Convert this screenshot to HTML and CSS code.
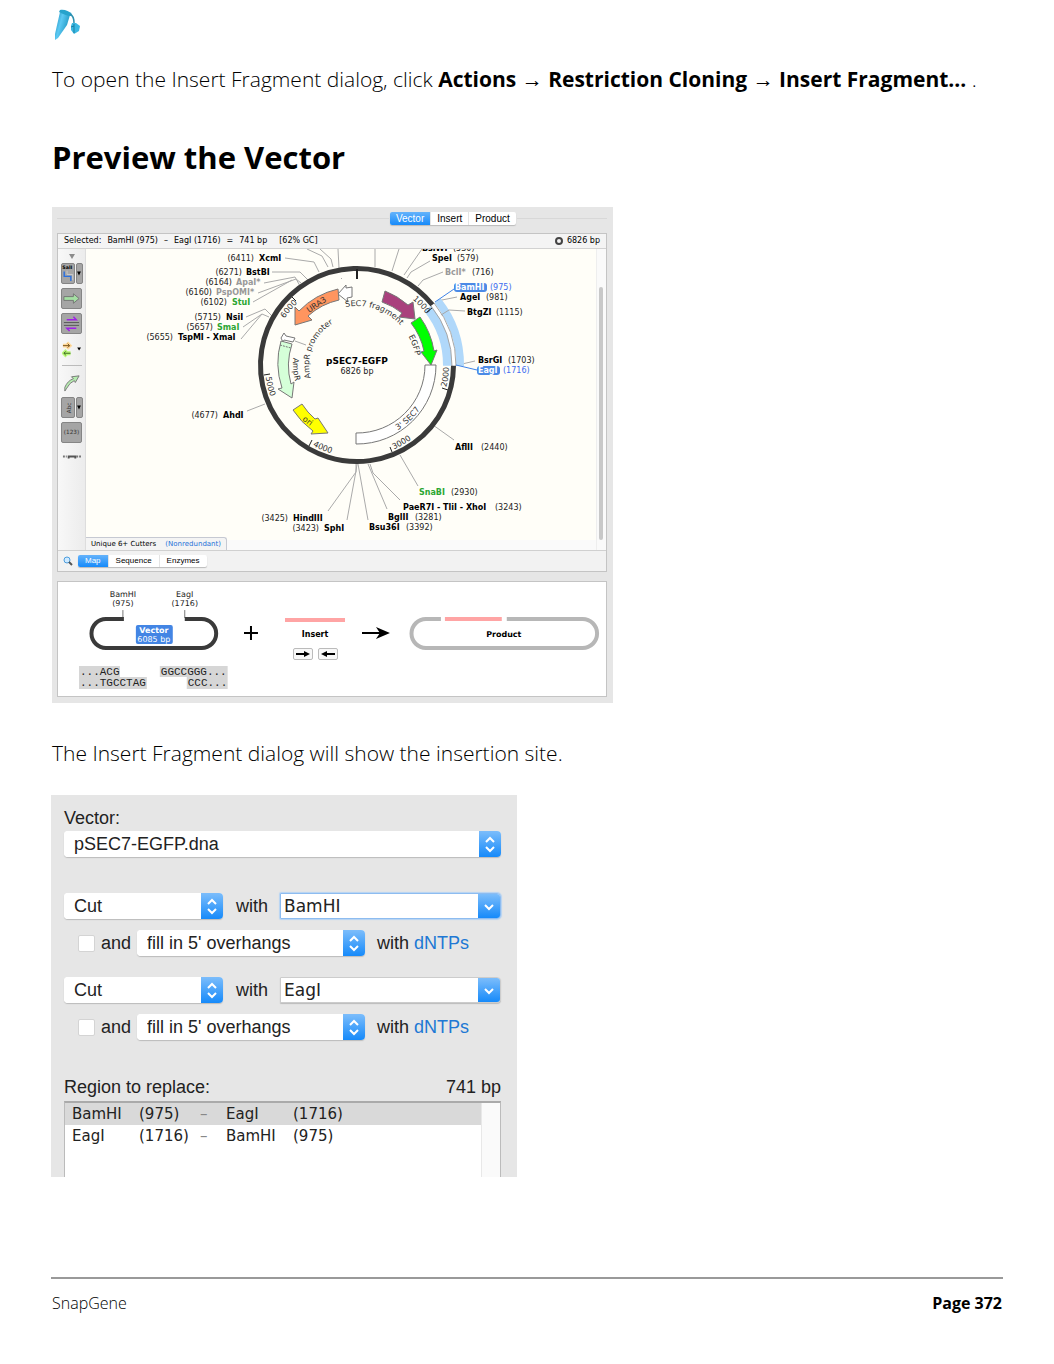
FILE: index.html
```html
<!DOCTYPE html>
<html lang="en">
<head>
<meta charset="utf-8">
<meta name="viewport" content="width=device-width, initial-scale=1">
<title>Insert Fragment - SnapGene</title>
<link rel="stylesheet" href="styles.css">
</head>
<body>
<div class="page">
  <header class="page-header">
    <svg class="logo" viewBox="0 0 28 34" role="img" aria-label="SnapGene">
      <defs><linearGradient id="tube" x1="0" x2="1" y1="0" y2=".5"><stop offset="0" stop-color="#1688b4"/><stop offset=".45" stop-color="#5cc9f3"/><stop offset="1" stop-color="#1b93bd"/></linearGradient></defs>
      <path d="M8 4 18 7 15 17 6 30 3 32 3 26Z" fill="url(#tube)"/>
      <path d="M8 2c4-1 9 1 12 4l-1 2C15 8 11 6 7 4Z" fill="#27a3cc"/>
      <path d="M18 6q4 2 4 9" fill="none" stroke="#2c8fae" stroke-width="1.5"/>
      <path d="M20 15l4 0 4 3-1 5-5 3-3-4 0-4Z" fill="#3ab8e2"/>
      <path d="M22 16v9M19 19l3-1" stroke="#187ea4" fill="none"/>
    </svg>
  </header>

  <main>
    <p>To open the Insert Fragment dialog, click <b>Actions</b> → <b>Restriction Cloning</b> → <b>Insert Fragment... </b>.</p>
    <h1>Preview the Vector</h1>

    <section class="window" aria-label="Vector preview">
      <div class="window-tabs">
        <div class="segmented big">
          <button class="active">Vector</button><button>Insert</button><button>Product</button>
        </div>
      </div>

      <div class="panel">
        <div class="info-bar">
          <span>Selected:</span><span>BamHI (975)</span><span>–</span><span>EagI (1716)</span><span>=</span><span>741 bp</span><span class="gc">[62% GC]</span>
          <span class="total"><i class="ring"></i>6826 bp</span>
        </div>
        <div class="workspace">
          <div class="toolbar">
            <svg class="marker" viewBox="0 0 6 5" aria-hidden="true"><path d="M0 0H6L3 5Z" fill="#8b8b8b"/></svg>
            <div class="tool-pair">
              <button class="tool" aria-label="Enzyme sites"><svg viewBox="0 0 12 20"><text x="0" y="5" class="tool-tiny">SalI</text><path d="M2 8V13H9V18" fill="none" stroke="#2b70e0" stroke-width="1.5"/><path d="M5 7V11H11V17" fill="none" stroke="#ccc"/></svg></button>
              <button class="tool narrow" aria-label="Enzyme options"><svg viewBox="0 0 4 20"><path d="M0 8H4L2 12Z"/></svg></button>
            </div>
            <button class="tool" aria-label="Features"><svg viewBox="0 0 20 20"><path d="M2 8H12V5L18 10 12 15V12H2Z" fill="#a4dfa3" stroke="#747474"/></svg></button>
            <button class="tool" aria-label="Primers"><svg viewBox="0 0 20 20"><path d="M2 9H18M2 12H18" stroke="#555"/><path d="M5 6H15L12 3M15 15H5L8 18" fill="none" stroke="#a020e8" stroke-width="1.5"/></svg></button>
            <button class="tool plain" aria-label="Translations"><svg viewBox="0 0 20 20"><path d="M1 7H8M5 4 8 7 5 10" fill="none" stroke="#ffd99a" stroke-width="4"/><path d="M1 7H8M6 5 8 7 6 9" fill="none" stroke="#704b16"/><path d="M2 15H9M5 12 2 15 5 18" fill="none" stroke="#b9f779" stroke-width="4"/><path d="M2 15H9M4 13 2 15 4 17" fill="none" stroke="#3c681c"/><path d="M16 9H20L18 12Z"/></svg></button>
            <span class="tool-rule"></span>
            <button class="tool plain" aria-label="Open reading frames"><svg viewBox="0 0 20 20"><path d="M3 19V15Q6 8 12 6L10 4 18 3 14 10 13 8Q8 10 5 16Z" fill="#b5edaf" stroke="#777"/></svg></button>
            <div class="tool-pair">
              <button class="tool" aria-label="Labels"><svg viewBox="0 0 12 20"><text class="tool-text" transform="translate(9 16) rotate(-90)">Abc</text></svg></button>
              <button class="tool narrow" aria-label="Label options"><svg viewBox="0 0 4 20"><path d="M0 8H4L2 12Z"/></svg></button>
            </div>
            <button class="tool" aria-label="Numbering"><svg viewBox="0 0 20 20"><text class="tool-text" x="10" y="12" text-anchor="middle">(123)</text></svg></button>
            <button class="tool plain" aria-label="Scale"><svg viewBox="0 0 20 20"><path d="M1 9H5M15 9H20" stroke="#777" stroke-width="2" stroke-dasharray="2 1"/><path d="M7 11V9H14V11" fill="none" stroke="#555" stroke-width="2"/></svg></button>
          </div>

          <div class="canvas">
            <svg class="plasmid" viewBox="86 249 510 288" role="img" aria-label="Plasmid map of pSEC7-EGFP">
              <defs>
                <path id="arc59" d="M298 365A59 59 0 0 1 416 365"/>
                <path id="arc48" d="M357 413A48 48 0 0 1 357 317"/>
                <path id="arc86" d="M271 365A86 86 0 0 1 443 365"/>
                <path id="arc64" d="M357 301A64 64 0 0 0 357 429"/>
                <path id="arc92" d="M265 365A92 92 0 0 0 449 365"/>
                <path id="arc77" d="M357 442A77 77 0 0 0 434 365"/>
              </defs>
              <g class="leader">
                <path d="M285 258 314 262 319 272M272 272H300L308 280M264 283 295 277 300 286M258 293 296 279 301 283M253 302 292 280M246 317 265 309 272 316M243 327 262 314 269 317M241 339 262 314M247 411 265 404"/>
                <path d="M307 249 322 256 328 267M320 249 331 259 333 267M338 249 339 268M375 249V267M399 249 392 271M422 249 404 275M430 261 411 272 407 278M443 272 423 280 418 286M457 297 437 301M465 311 449 310 442 314M475 361 462 364"/>
                <path d="M433 425 454 440M400 455 418 486M370 464 373 473 400 500M368 464 376 483 387 509M358 464 368 520M357 464 356 471 347 520M356 464V472L328 511M341 278 342 279M295 341 306 345"/>
              </g>
              <path d="M427.700 308.500A90.500 90.500 0 0 1 447.500 365.800" class="band" stroke-width="9"/>
              <path d="M437.500 300.700A103 103 0 0 1 460 365.900" class="band" stroke-width="8"/>
              <path d="M433 304.500A97 97 0 0 1 454 366" fill="none" stroke="#fff" stroke-width="4"/>
              <path d="M431 306A95 95 0 0 1 452 366M434 303A99 99 0 0 1 456 366M441 315 449 310" fill="none" stroke="#a7a7a7"/>
              <path d="M435 302 454 289M456 365 477 370" stroke="#3f83e8" fill="none"/>
              <path d="M453.500 365.800A96.500 96.500 0 1 1 432.400 304.800" fill="none" stroke="#3a3a3a" stroke-width="5"/>
              <path d="M357 269V279" stroke="#222" stroke-width="2"/>
              <path d="M432 308 427 312M448 390 442 388M392 452 390 447M309 446 312 440M264 375 270 374M292 297 296 301" stroke="#222"/>
              <g class="feature">
                <path fill="#ff955f" d="M338 289A79 79 0 0 0 299 311L295 307 295 325 312 320 308 316A68 68 0 0 1 339 300Z"/>
                <path fill="#fff" d="M338 294 346 285V288L352 287V297L347 298 348 302Z"/>
                <path fill="#a9417d" d="M385 291A79 79 0 0 1 408 305L413 302 415 319 399 317 402 313A68 68 0 0 0 382 302Z"/>
                <path fill="#0f0" d="M420 317A79 79 0 0 1 434 351L437 350 431 365 421 352 424 351A68 68 0 0 0 411 323Z"/>
                <path fill="#fff" d="M436 365A79 79 0 0 1 356 444V433A68 68 0 0 0 425 365Z"/>
                <path fill="#ff0" d="M302 404A68 68 0 0 0 315 419L318 418 328 433 311 434 313 431A79 79 0 0 1 293 410Z"/>
                <path fill="#d5ffd8" d="M281 341A79 79 0 0 0 282 388L278 389 292 398 294 382 291 384A68 68 0 0 1 292 344Z"/>
                <path d="M280 345 291 348" stroke-dasharray="2 1"/>
                <path fill="#fff" d="M281 338 284 333 286 336 295 338 293 342 284 340 283 342Z"/>
              </g>
              <g class="arc-text">
                <text><textPath href="#arc59" startOffset="81">SEC7 fragment</textPath></text>
                <text><textPath href="#arc59" startOffset="155">EGFP</textPath></text>
                <text><textPath href="#arc48" startOffset="62">AmpR promoter</textPath></text>
                <text><textPath href="#arc64" startOffset="93">AmpR</textPath></text>
                <text><textPath href="#arc77" startOffset="43">3' SEC7</textPath></text>
                <text transform="translate(309 313) rotate(-34)">URA3</text>
                <text transform="translate(302 420) rotate(36)">ori</text>
                <text><textPath href="#arc86" startOffset="195">1000</textPath></text>
                <text><textPath href="#arc86" startOffset="49">6000</textPath></text>
                <text><textPath href="#arc92" startOffset="266">2000</textPath></text>
                <text><textPath href="#arc92" startOffset="182">3000</textPath></text>
                <text><textPath href="#arc92" startOffset="98">4000</textPath></text>
                <text><textPath href="#arc92" startOffset="12">5000</textPath></text>
              </g>
              <text class="plasmid-name" x="357" y="364" text-anchor="middle">pSEC7-EGFP</text>
              <text class="num" x="357" y="374" text-anchor="middle">6826 bp</text>
              <rect x="454" y="283" width="33" height="9" rx="3" fill="#4b8ae6"/>
              <rect x="477" y="366" width="23" height="9" rx="3" fill="#4b8ae6"/>
              <g class="num" text-anchor="end">
                <text x="254" y="261">(6411)</text><text x="242" y="275">(6271)</text><text x="232" y="285">(6164)</text><text x="212" y="295">(6160)</text><text x="227" y="305">(6102)</text><text x="221" y="320">(5715)</text><text x="213" y="330">(5657)</text><text x="173" y="340">(5655)</text><text x="218" y="418">(4677)</text><text x="288" y="521">(3425)</text><text x="319" y="531">(3423)</text>
              </g>
              <g class="num">
                <text x="453" y="251">(530)</text><text x="457" y="261">(579)</text><text x="472" y="275">(716)</text><text x="486" y="300">(981)</text><text x="496" y="315">(1115)</text><text x="508" y="363">(1703)</text><text x="481" y="450">(2440)</text><text x="451" y="495">(2930)</text><text x="495" y="510">(3243)</text><text x="415" y="520">(3281)</text><text x="406" y="530">(3392)</text>
                <text class="blue" x="490" y="290">(975)</text><text class="blue" x="503" y="373">(1716)</text>
              </g>
              <g class="site">
                <text x="259" y="261">XcmI</text><text x="246" y="275">BstBI</text><text class="dim" x="236" y="285">ApaI*</text><text class="dim" x="216" y="295">PspOMI*</text><text class="green" x="232" y="305">StuI</text><text x="226" y="320">NsiI</text><text class="green" x="217" y="330">SmaI</text><text x="178" y="340">TspMI - XmaI</text><text x="223" y="418">AhdI</text><text x="293" y="521">HindIII</text><text x="324" y="531">SphI</text>
                <text x="422" y="251">BsiWI</text><text x="432" y="261">SpeI</text><text class="dim" x="445" y="275">BclI*</text><text class="white" x="455" y="290">BamHI</text><text x="460" y="300">AgeI</text><text x="467" y="315">BtgZI</text><text x="478" y="363">BsrGI</text><text class="white" x="478" y="373">EagI</text><text x="455" y="450">AflII</text><text class="green" x="419" y="495">SnaBI</text><text x="403" y="510">PaeR7I - TliI - XhoI</text><text x="388" y="520">BglII</text><text x="369" y="530">Bsu36I</text>
              </g>
            </svg>
            <div class="canvas-foot"><div class="enzyme-tab">Unique 6+ Cutters <a href="#nonredundant">(Nonredundant)</a></div></div>
          </div>
          <div class="scroll-track"><div class="scroll-thumb"></div></div>
        </div>
        <div class="view-bar">
          <svg class="lens" viewBox="0 0 10 10" aria-hidden="true"><circle cx="4" cy="4" r="3" fill="#cfeaff" stroke="#4c9ddd"/><path d="M6 6 9 9" stroke="#555" stroke-width="2"/></svg>
          <div class="segmented"><button class="active">Map</button><button>Sequence</button><button>Enzymes</button></div>
        </div>
      </div>

      <div class="panel assembly">
        <svg class="vector-art" viewBox="78 582 152 114" role="img" aria-label="Cut vector">
          <g class="num" text-anchor="middle"><text x="123" y="597">BamHI</text><text x="123" y="606">(975)</text><text x="185" y="597">EagI</text><text x="185" y="606">(1716)</text></g>
          <path d="M123 610V618M185 610V618" stroke="#777"/>
          <path d="M124 619H106A14 14 0 0 0 106 648H202A14 14 0 0 0 202 619H185" fill="none" stroke="#3a3a3a" stroke-width="4"/>
          <rect x="136" y="625" width="37" height="19" rx="2" fill="#4385e4"/>
          <text class="site white" x="154" y="633" text-anchor="middle">Vector</text><text class="num white" x="154" y="642" text-anchor="middle">6085 bp</text>
          <path d="M79 666H120V677H147V689H79ZM160 666H228V689H187V677H160Z" fill="#d6d6d6"/>
          <g class="bases"><text x="80" y="675">...ACG</text><text x="80" y="686">...TGCCTAG</text><text x="161" y="675">GGCCGGG...</text><text x="188" y="686">CCC...</text></g>
        </svg>
        <svg class="plus" viewBox="0 0 14 14" aria-label="plus"><path d="M7 0V14M0 7H14" stroke="#000" stroke-width="2"/></svg>
        <div class="insert">
          <span class="insert-line"></span>
          <b>Insert</b>
          <div class="orient">
            <button aria-label="Forward"><svg viewBox="0 0 16 8"><path d="M1 4H12" stroke="#000" stroke-width="2"/><path d="M9 1 15 4 9 7Z"/></svg></button>
            <button aria-label="Reverse"><svg viewBox="0 0 16 8"><path d="M4 4H15" stroke="#000" stroke-width="2"/><path d="M7 1 1 4 7 7Z"/></svg></button>
          </div>
        </div>
        <svg class="arrow" viewBox="0 0 28 12" aria-hidden="true"><path d="M0 6H20" stroke="#000" stroke-width="2"/><path d="M14 0 28 6 14 12 18 6Z"/></svg>
        <svg class="product-art" viewBox="409 616 191 35" role="img" aria-label="Product">
          <path d="M441 619H426A14 14 0 0 0 426 648H583A14 14 0 0 0 583 619H507" fill="none" stroke="#b7b7b7" stroke-width="4"/><path d="M445 619H502" stroke="#ffa4a4" stroke-width="4"/>
          <text class="site" x="504" y="637" text-anchor="middle">Product</text>
        </svg>
      </div>
    </section>

    <p class="caption">The Insert Fragment dialog will show the insertion site.</p>

    <form class="dialog">
      <label for="vector">Vector:</label>
      <div class="picker"><select id="vector"><option>pSEC7-EGFP.dna</option></select><span class="step"><svg viewBox="0 0 12 18"><path d="M2 7 6 3 10 7M2 12 6 16 10 12"/></svg></span></div>

      <div class="cut first">
        <div class="picker"><select aria-label="First cut action"><option>Cut</option></select><span class="step"><svg viewBox="0 0 12 18"><path d="M2 7 6 3 10 7M2 12 6 16 10 12"/></svg></span></div>
        <label for="enzyme1">with</label>
        <div class="combo focus"><input id="enzyme1" type="text" value="BamHI"><button type="button" class="step" aria-label="Choose enzyme"><svg viewBox="0 0 12 18"><path d="M2 8 6 12 10 8"/></svg></button></div>
      </div>
      <div class="fill">
        <input type="checkbox" id="fill1"><label for="fill1">and</label>
        <div class="picker"><select aria-label="First end treatment"><option>fill in 5' overhangs</option></select><span class="step"><svg viewBox="0 0 12 18"><path d="M2 7 6 3 10 7M2 12 6 16 10 12"/></svg></span></div>
        <span>with <a href="#dntps">dNTPs</a></span>
      </div>

      <div class="cut">
        <div class="picker"><select aria-label="Second cut action"><option>Cut</option></select><span class="step"><svg viewBox="0 0 12 18"><path d="M2 7 6 3 10 7M2 12 6 16 10 12"/></svg></span></div>
        <label for="enzyme2">with</label>
        <div class="combo"><input id="enzyme2" type="text" value="EagI"><button type="button" class="step" aria-label="Choose enzyme"><svg viewBox="0 0 12 18"><path d="M2 8 6 12 10 8"/></svg></button></div>
      </div>
      <div class="fill">
        <input type="checkbox" id="fill2"><label for="fill2">and</label>
        <div class="picker"><select aria-label="Second end treatment"><option>fill in 5' overhangs</option></select><span class="step"><svg viewBox="0 0 12 18"><path d="M2 7 6 3 10 7M2 12 6 16 10 12"/></svg></span></div>
        <span>with <a href="#dntps">dNTPs</a></span>
      </div>

      <div class="region-head"><span id="region">Region to replace:</span><span>741 bp</span></div>
      <div class="region-list">
        <table aria-labelledby="region">
          <tr class="selected"><td>BamHI</td><td>(975)</td><td class="dash">–</td><td>EagI</td><td>(1716)</td></tr>
          <tr><td>EagI</td><td>(1716)</td><td class="dash">–</td><td>BamHI</td><td>(975)</td></tr>
        </table>
        <div class="list-track"></div>
      </div>
    </form>
  </main>

  <footer class="page-footer"><span>SnapGene</span><b>Page 372</b></footer>
</div>
</body>
</html>
```
FILE: styles.css
```css
* { box-sizing: border-box; }
body { margin: 0; background: #fff; color: #000; font-family: "Open Sans", sans-serif; font-size: 21px; font-weight: 300; line-height: 30px; }
svg { display: block; }
b { font-weight: 700; }
button { font: inherit; color: inherit; border: 0; padding: 0; margin: 0; background: none; }
.page { padding: 8px 51px 48px 52px; }
.page-header { height: 34px; }
.logo { width: 28px; height: 34px; }
p { margin: 22px 0 0; }
h1 { margin: 41px 0 0; font-size: 31px; line-height: 44px; font-weight: 700; }

/* Vector preview window */
.window { width: 100%; max-width: 561px; margin-top: 28px; padding: 4px 6px 6px 5px; background: #e6e6e6; font-family: "DejaVu Sans", sans-serif; font-weight: 400; font-size: 8px; line-height: 10px; }
.window-tabs { display: flex; align-items: center; gap: 1px; height: 15px; margin-bottom: 7px; }
.window-tabs::before { content: ""; flex: 331; height: 1px; background: #d8d8d8; }
.window-tabs::after { content: ""; flex: 90; height: 1px; background: #d8d8d8; }
.segmented { display: flex; background: #fff; border-radius: 2px; box-shadow: 0 1px 1px #bbb; font-family: "Liberation Sans", sans-serif; font-size: 8px; line-height: 12px; }
.segmented button { padding: 0 7px; border-right: 1px solid #e4e4e4; }
.segmented button:last-child { border-right: 0; }
.segmented .active { background: linear-gradient(#65b3fb, #168afa); color: #fff; border-radius: 2px 0 0 2px; }
.segmented.big { font-size: 10px; line-height: 13px; }
.segmented.big button { padding: 0 6px; }
.panel { background: #fff; border: 1px solid #c4c4c4; }
.info-bar { display: flex; align-items: center; gap: 6px; height: 15px; padding: 0 6px; background: #f4f4f4; border-bottom: 1px solid #d2d2d2; white-space: nowrap; }
.gc { margin-left: 6px; }
.total { display: flex; align-items: center; gap: 4px; margin-left: auto; }
.ring { width: 8px; height: 8px; border: 2px solid #444; border-radius: 50%; }
.workspace { display: flex; border-bottom: 1px solid #d0d0d0; }
.toolbar { display: flex; flex-direction: column; align-items: center; gap: 4px; flex: 0 0 28px; padding-top: 5px; background: linear-gradient(90deg, #f8f8f8, #ececec); border-right: 1px solid #ddd; }
.marker { width: 6px; height: 5px; }
.tool-pair { display: flex; gap: 1px; }
.tool { display: flex; align-items: center; justify-content: center; width: 21px; height: 21px; background: #a5a5a5; border: 1px solid #858585; border-radius: 2px; }
.tool svg { height: 19px; width: 19px; }
.tool-pair .tool { width: 14px; height: 21px; }
.tool-pair .tool svg { width: 12px; }
.tool-pair .narrow { width: 7px; }
.tool-pair .narrow svg { width: 4px; }
.tool.plain { background: none; border-color: transparent; }
.tool-rule { width: 20px; height: 1px; margin: 2px 0; background: #bbb; }
.tool-tiny { font-size: 5px; font-weight: 700; }
.tool-text { font-size: 6px; fill: #333; }
.canvas { flex: 1; background: #fffef8; min-width: 0; }
.plasmid { width: 100%; height: auto; }
.canvas-foot { height: 13px; background: linear-gradient(#fffef8 3px, #fafafa 3px); }
.enzyme-tab { width: max-content; height: 13px; padding: 1px 5px; background: #f4f4f4; border: 1px solid #c6c9d2; border-left: 0; border-bottom: 0; border-radius: 0 3px 0 0; font-size: 7px; }
.enzyme-tab a { margin-left: 7px; color: #2472d8; text-decoration: none; }
.scroll-track { flex: 0 0 10px; padding: 38px 3px 10px 2px; background: #fafafa; border-left: 1px solid #eee; }
.scroll-thumb { height: 100%; background: #c8c8c8; border-radius: 3px; }
.view-bar { display: flex; align-items: center; gap: 5px; height: 20px; padding: 0 5px; background: #f2f2f2; }
.lens { width: 10px; height: 10px; }
.leader { fill: none; stroke: #aaa; }
.band { fill: none; stroke: #b0d8fa; }
.feature { fill: none; stroke: #777; stroke-width: 1px; }
.arc-text { font-size: 8px; fill: #333; }
.num { font-size: 8px; fill: #222; }
.site { font-size: 8px; font-weight: 700; }
.plasmid-name { font-size: 9px; font-weight: 700; }
.green { fill: #2ca632; }
.dim { fill: #999; }
.blue { fill: #3c6cf0; }
.white { fill: #fff; }

/* Assembly overview */
.assembly { display: flex; align-items: center; height: 116px; margin-top: 9px; padding: 0 6px 0 20px; }
.vector-art { width: 152px; height: 114px; }
.bases { font-family: "Liberation Mono", monospace; font-size: 11px; fill: #222; }
.plus { width: 14px; height: 14px; margin: 0 27px 12px 14px; }
.insert { display: flex; flex-direction: column; align-items: center; width: 61px; }
.insert-line { width: 100%; height: 4px; margin-bottom: 8px; background: #ffa4a4; }
.orient { display: flex; gap: 5px; margin-top: 8px; }
.orient button { width: 20px; height: 12px; border: 1px solid #bbb; border-radius: 2px; background: #f8f8f8; }
.orient svg { width: 16px; height: 8px; margin: 1px; }
.arrow { width: 28px; height: 12px; margin: 0 19px 12px 17px; }
.product-art { width: 191px; height: 35px; margin-bottom: 12px; }

.caption { margin-top: 35px; }

/* Insert fragment dialog */
.dialog { width: 100%; max-width: 466px; height: 382px; margin: 27px 0 0 -1px; padding: 12px 16px 0 13px; background: #e6e6e6; overflow: hidden; font-family: "Liberation Sans", sans-serif; font-weight: 400; font-size: 18px; line-height: 22px; color: #222; }
.dialog > label { display: block; height: 24px; }
.picker, .combo { display: flex; height: 26px; background: #fff; border-radius: 4px; box-shadow: 0 1px 1px #bbb; overflow: hidden; }
.picker select, .combo input { flex: 1; min-width: 0; appearance: none; border: 0; outline: 0; margin: 0; background: #fff; color: #222; font: inherit; padding: 0 10px; }
.combo { flex: 1; border: 1px solid #ccc; border-radius: 1px 4px 4px 1px; }
.combo.focus { border-color: #8dbcf0; box-shadow: 0 0 1px 1px #b5d3f3; }
.combo input { padding: 0 3px; font-family: "DejaVu Sans", sans-serif; font-size: 17px; }
.step { display: grid; place-items: center; flex: 0 0 22px; background: linear-gradient(#7cbdfb, #168afa); }
.step svg { width: 12px; height: 18px; fill: none; stroke: #fff; stroke-width: 2px; }
.cut { display: flex; align-items: center; margin-top: 21px; }
.cut.first { margin-top: 36px; }
.cut .picker { width: 159px; }
.cut label { margin: 0 12px 0 13px; }
.fill { display: flex; align-items: center; height: 26px; margin-top: 11px; padding-left: 14px; }
.fill input { appearance: none; width: 17px; height: 17px; margin: 0 6px 0 0; border: 1px solid #d4d4d4; border-radius: 2px; background: #fff; }
.fill .picker { width: 228px; margin: 0 12px 0 6px; }
.dialog a { color: #2078d4; text-decoration: none; }
.region-head { display: flex; justify-content: space-between; margin-top: 36px; }
.region-list { display: flex; height: 90px; margin-top: 3px; background: #fff; border: 1px solid #bbb; border-top: 2px solid #aaa; }
table { flex: 1; align-self: flex-start; border-collapse: collapse; table-layout: fixed; font-family: "DejaVu Sans", sans-serif; font-size: 15px; line-height: 22px; }
td { padding: 0; width: 67px; }
td:first-child { width: 74px; padding-left: 7px; }
td.dash { width: 26px; color: #888; }
td:nth-child(2) { width: 61px; }
td:last-child { width: auto; }
.selected { background: #d9d9d9; }
.list-track { width: 19px; background: #fafafa; border-left: 1px solid #e8e8e8; }

.page-footer { display: flex; justify-content: space-between; margin: 100px 0 0 -1px; padding: 12px 1px 0; border-top: 2px solid #999; font-size: 16px; line-height: 24px; }
```
